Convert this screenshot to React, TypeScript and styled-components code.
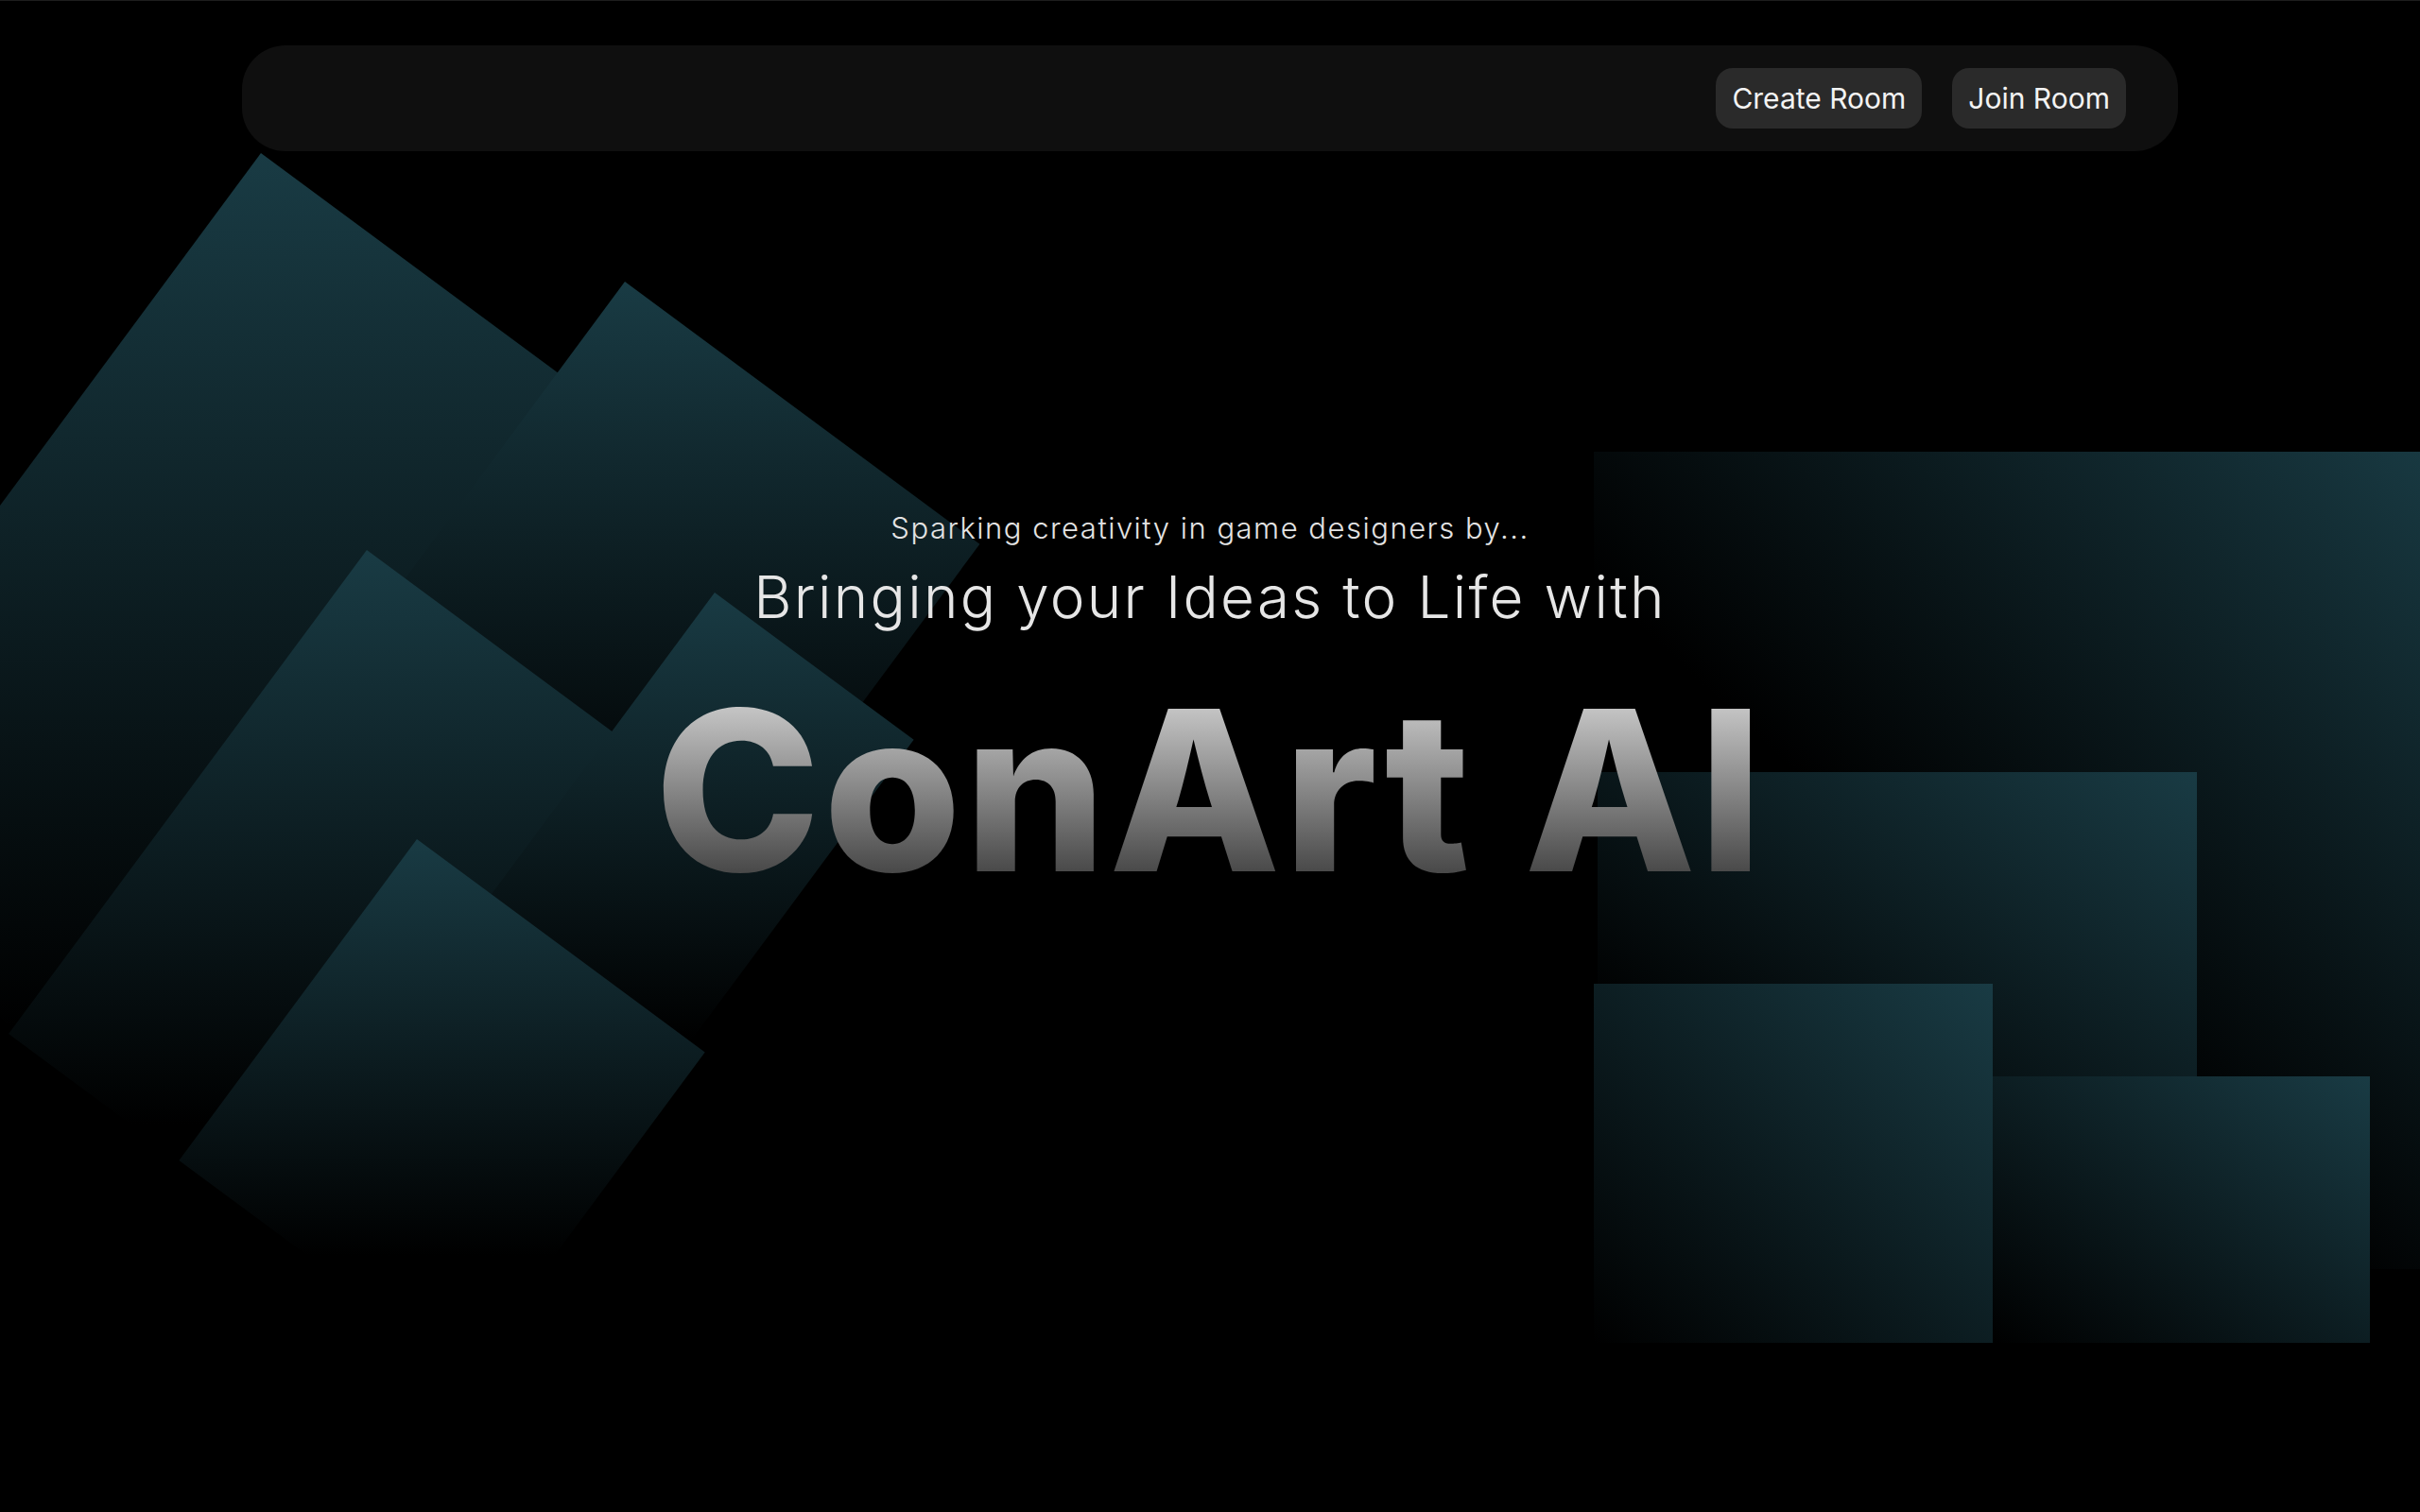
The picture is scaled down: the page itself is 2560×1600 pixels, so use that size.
import React from "react";
import styled, { createGlobalStyle } from "styled-components";

const GlobalStyle = createGlobalStyle`
  html, body {
    margin: 0;
    padding: 0;
    background: #000;
  }
  body {
    font-family: Inter, "Noto Sans", sans-serif;
    -webkit-font-smoothing: antialiased;
  }
  * { box-sizing: border-box; }
`;

const Page = styled.div`
  position: relative;
  min-height: 100vh;
  overflow: hidden;
  background: #000;
  border-top: 1px solid #1d1d1d;
`;

const Backdrop = styled.svg`
  position: absolute;
  inset: 0;
  width: 100%;
  height: 100%;
  z-index: 0;
  pointer-events: none;
`;

const Nav = styled.nav`
  position: relative;
  z-index: 1;
  width: 80%;
  height: 112px;
  margin: 47px auto 0;
  padding: 0 55px;
  border-radius: 46px;
  background: #0f0f0f;
  display: flex;
  align-items: center;
  justify-content: flex-end;
  gap: 32px;
`;

const NavButton = styled.button`
  height: 64px;
  padding: 0 17px;
  border: none;
  border-radius: 18px;
  background: #2a2a2a;
  color: #f3f3f3;
  font-family: Inter, "Noto Sans", sans-serif;
  font-size: 30px;
  font-weight: 400;
  cursor: pointer;
`;

const Hero = styled.section`
  position: relative;
  z-index: 1;
  display: flex;
  flex-direction: column;
  align-items: center;
  padding-top: 380px;
`;

const Tagline = styled.p`
  margin: 0;
  font-family: Inter, "Noto Sans", sans-serif;
  font-size: 31px;
  line-height: 38px;
  font-weight: 300;
  letter-spacing: 1.5px;
  color: #e3e3e3;
`;

const Subtitle = styled.h2`
  margin: 18px 0 0;
  font-family: Inter, "Noto Sans", sans-serif;
  font-size: 62px;
  line-height: 72px;
  font-weight: 300;
  letter-spacing: 2.3px;
  color: #e6e6e6;
`;

const Title = styled.h1`
  margin: 50px 0 0;
  font-family: Inter, "Noto Sans", sans-serif;
  font-size: 236px;
  line-height: 236px;
  font-weight: 800;
  letter-spacing: 3px;
  background: linear-gradient(to bottom, #c6c6c6 12%, #474747 88%);
  -webkit-background-clip: text;
  background-clip: text;
  color: transparent;
`;

const TEAL = "#193b44";
const ANG = (36.5 * Math.PI) / 180;
const C = Math.cos(ANG);
const S = Math.sin(ANG);

type Tilt = { x: number; y: number; w: number; h: number };

const tilted: Tilt[] = [
  { x: 276, y: 161, w: 780, h: 900 },
  { x: 661, y: 297, w: 467, h: 600 },
  { x: 388, y: 581, w: 450, h: 637 },
  { x: 756, y: 626, w: 262, h: 560 },
  { x: 441, y: 887, w: 379, h: 423 },
];

const pts = ({ x, y, w, h }: Tilt) => {
  const p = [
    [x, y],
    [x + w * C, y + w * S],
    [x + w * C - h * S, y + w * S + h * C],
    [x - h * S, y + h * C],
  ];
  return p.map((q) => q.map((n) => n.toFixed(1)).join(",")).join(" ");
};

type Block = { x: number; y: number; w: number; h: number; fade: number };

const blocks: Block[] = [
  { x: 1686, y: 477, w: 920, h: 865, fade: 0.58 },
  { x: 1690, y: 816, w: 634, h: 420, fade: 0.8 },
  { x: 1686, y: 1040, w: 422, h: 380, fade: 1 },
  { x: 2108, y: 1138, w: 399, h: 282, fade: 1 },
];

const Shapes = () => (
  <Backdrop viewBox="0 0 2560 1600" preserveAspectRatio="xMinYMin slice" aria-hidden>
    <defs>
      <linearGradient id="vfade" x1="0" y1="0" x2="0" y2="1">
        <stop offset="0" stopColor={TEAL} />
        <stop offset="0.78" stopColor="#000" />
      </linearGradient>
      {blocks.map((b, i) => (
        <linearGradient key={i} id={`dfade${i}`} x1="1" y1="0" x2="0" y2="1">
          <stop offset="0" stopColor={TEAL} />
          <stop offset={b.fade} stopColor="#000" />
        </linearGradient>
      ))}
    </defs>
    {tilted.map((t, i) => (
      <polygon key={i} points={pts(t)} fill="url(#vfade)" />
    ))}
    {blocks.map((b, i) => (
      <rect key={i} x={b.x} y={b.y} width={b.w} height={b.h} fill={`url(#dfade${i})`} />
    ))}
  </Backdrop>
);

export default function App() {
  return (
    <>
      <GlobalStyle />
      <Page>
        <Shapes />
        <Nav>
          <NavButton>Create Room</NavButton>
          <NavButton>Join Room</NavButton>
        </Nav>
        <Hero>
          <Tagline>Sparking creativity in game designers by...</Tagline>
          <Subtitle>Bringing your Ideas to Life with</Subtitle>
          <Title>ConArt AI</Title>
        </Hero>
      </Page>
    </>
  );
}
